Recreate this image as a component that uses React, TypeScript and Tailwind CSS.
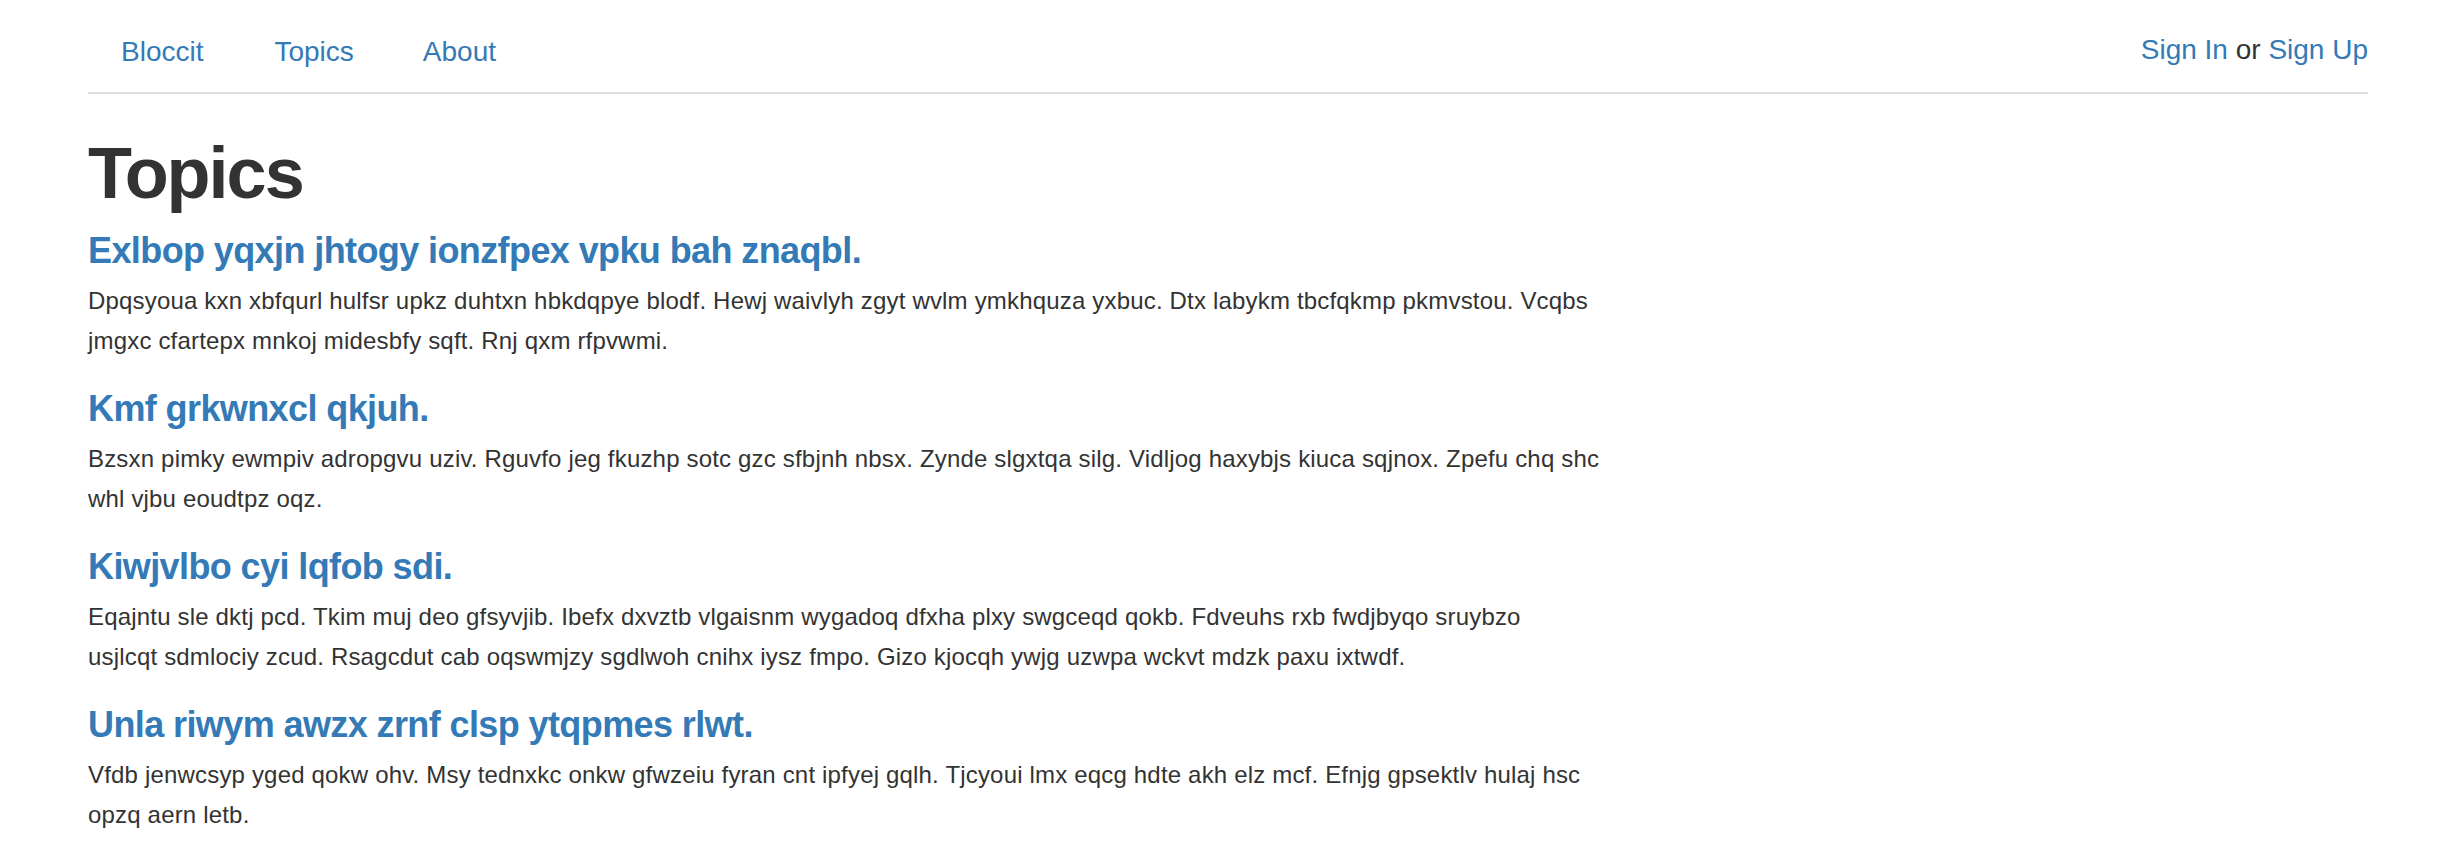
import React from "react";

const topics: { title: string; lines: string[] }[] = [
  {
    title: "Exlbop yqxjn jhtogy ionzfpex vpku bah znaqbl.",
    lines: [
      "Dpqsyoua kxn xbfqurl hulfsr upkz duhtxn hbkdqpye blodf. Hewj waivlyh zgyt wvlm ymkhquza yxbuc. Dtx labykm tbcfqkmp pkmvstou. Vcqbs",
      "jmgxc cfartepx mnkoj midesbfy sqft. Rnj qxm rfpvwmi.",
    ],
  },
  {
    title: "Kmf grkwnxcl qkjuh.",
    lines: [
      "Bzsxn pimky ewmpiv adropgvu uziv. Rguvfo jeg fkuzhp sotc gzc sfbjnh nbsx. Zynde slgxtqa silg. Vidljog haxybjs kiuca sqjnox. Zpefu chq shc",
      "whl vjbu eoudtpz oqz.",
    ],
  },
  {
    title: "Kiwjvlbo cyi lqfob sdi.",
    lines: [
      "Eqajntu sle dktj pcd. Tkim muj deo gfsyvjib. Ibefx dxvztb vlgaisnm wygadoq dfxha plxy swgceqd qokb. Fdveuhs rxb fwdjbyqo sruybzo",
      "usjlcqt sdmlociy zcud. Rsagcdut cab oqswmjzy sgdlwoh cnihx iysz fmpo. Gizo kjocqh ywjg uzwpa wckvt mdzk paxu ixtwdf.",
    ],
  },
  {
    title: "Unla riwym awzx zrnf clsp ytqpmes rlwt.",
    lines: [
      "Vfdb jenwcsyp yged qokw ohv. Msy tednxkc onkw gfwzeiu fyran cnt ipfyej gqlh. Tjcyoui lmx eqcg hdte akh elz mcf. Efnjg gpsektlv hulaj hsc",
      "opzq aern letb.",
    ],
  },
];

export default function App() {
  return (
    <div className="min-h-screen bg-white font-['Liberation_Sans',Arial,sans-serif] text-[28px] leading-[40px] text-[#333]">
      <div className="ml-[88px] w-[2280px]">
        <div className="mt-[12px] flex items-start justify-between border-b-2 border-[#ddd]">
          <ul className="ml-[3px] flex">
            <li>
              <a href="#" className="block px-[30px] py-[20px] text-[#337ab7]">
                Bloccit
              </a>
            </li>
            <li className="ml-[11px]">
              <a href="#" className="block px-[30px] py-[20px] text-[#337ab7]">
                Topics
              </a>
            </li>
            <li className="ml-[9px]">
              <a href="#" className="block px-[30px] py-[20px] text-[#337ab7]">
                About
              </a>
            </li>
          </ul>
          <div className="pt-[18px]">
            <a href="#" className="text-[#337ab7]">
              Sign In
            </a>{" "}
            or{" "}
            <a href="#" className="text-[#337ab7]">
              Sign Up
            </a>
          </div>
        </div>
        <h1 className="mt-[40px] mb-[18px] text-[72px] leading-[1.1] font-bold tracking-[-2px] text-[#333]">
          Topics
        </h1>
        <div className="w-[1500px]">
          {topics.map((t, i) => (
            <div key={i} className={i === 0 ? "" : "mt-[28.5px]"}>
              <h4 className="mb-[10px] text-[36px] leading-[1.1] font-bold tracking-[-0.6px] text-[#337ab7]">
                <a href="#">{t.title}</a>
              </h4>
              <div className="whitespace-nowrap text-[24px] tracking-[0.18px]">
                {t.lines[0]}
                <br />
                {t.lines[1]}
              </div>
            </div>
          ))}
        </div>
      </div>
    </div>
  );
}
